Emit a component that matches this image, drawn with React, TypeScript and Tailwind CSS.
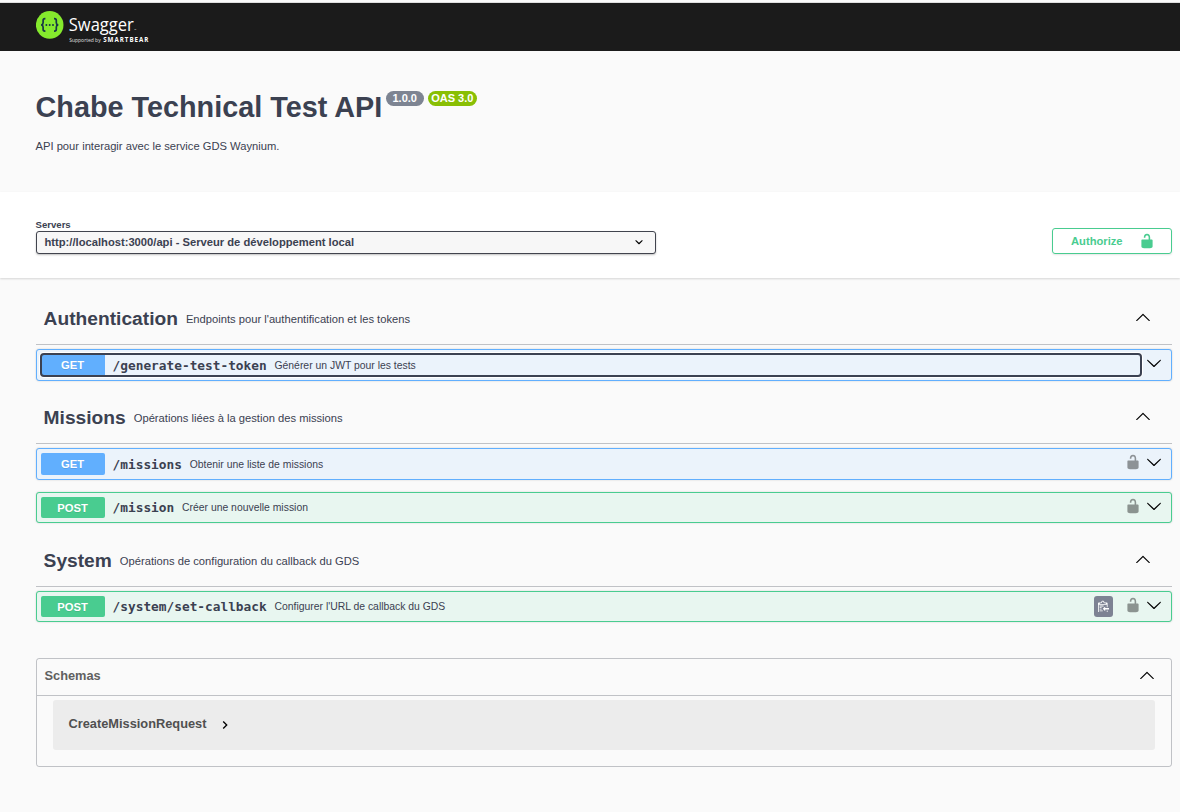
import React from "react";

const UP =
  "M17.418 14.908c.272.268.709.268.979 0s.271-.701 0-.969l-7.908-7.83c-.27-.268-.707-.268-.979 0l-7.908 7.83c-.27.268-.27.701 0 .969.271.268.709.268.979 0L10 7.767l7.418 7.141z";
const DOWN =
  "M17.418 6.109c.272-.268.709-.268.979 0s.271.701 0 .969l-7.908 7.83c-.27.268-.707.268-.979 0l-7.908-7.83c-.27-.268-.27-.701 0-.969.271-.268.709-.268.979 0L10 13.25l7.418-7.141z";
const SELECT_ARROW =
  "M13.418 7.859c.271-.268.709-.268.978 0 .27.268.272.701 0 .969l-3.908 3.83c-.27.268-.707.268-.979 0l-3.908-3.83c-.27-.267-.27-.701 0-.969.271-.268.709-.268.978 0L10 11l3.418-3.141z";
const UNLOCKED =
  "M15.8 8H14V5.6C14 2.703 12.665 1 10 1 7.334 1 6 2.703 6 5.6V6h2v-.801C8 3.754 8.797 3 10 3c1.203 0 2 .754 2 2.199V8H4c-.553 0-1 .646-1 1.199V17c0 .549.428 1.139.951 1.307l1.197.387C5.672 18.861 6.55 19 7.1 19h5.8c.549 0 1.428-.139 1.951-.307l1.196-.387c.524-.167.953-.757.953-1.306V9.199C17 8.646 16.352 8 15.8 8z";
const CLIPBOARD =
  "M2 13h4v1H2v-1zm5-6H2v1h5V7zm2 3V8l-3 3 3 3v-2h5v-2H9zM4.5 9H2v1h2.5V9zM2 12h2.5v-1H2v1zm9 1h1v2c-.02.28-.11.52-.3.7-.19.18-.42.28-.7.3H1c-.55 0-1-.45-1-1V4c0-.55.45-1 1-1h3c0-1.11.89-2 2-2 1.11 0 2 .89 2 2h3c.55 0 1 .45 1 1v5h-1V6H1v9h10v-2zM2 5h8c0-.55-.45-1-1-1H8c-.55 0-1-.45-1-1s-.45-1-1-1-1 .45-1 1-.45 1-1 1H3c-.55 0-1 .45-1 1z";

function Icon({ d, className = "" }: { d: string; className?: string }) {
  return (
    <svg viewBox="0 0 20 20" className={`size-4 shrink-0 ${className}`} fill="currentColor">
      <path d={d} />
    </svg>
  );
}

function Logo() {
  return (
    <svg width="130" height="48" viewBox="0 0 130 48" className="block">
      <circle cx="13.7" cy="21.9" r="13.8" fill="#85ea2d" />
      <g fill="none" stroke="#173647" strokeWidth="1.7">
        <path d="M9.4 15.6H8.9c-1.3 0-1.8.7-1.8 1.9v2.2c0 1.3-.6 2-1.9 2.2 1.3.2 1.9.9 1.9 2.2v2.2c0 1.2.5 1.9 1.8 1.9h.5" />
        <path d="M18 15.6h.5c1.3 0 1.8.7 1.8 1.9v2.2c0 1.3.6 2 1.9 2.2-1.3.2-1.9.9-1.9 2.2v2.2c0 1.2-.5 1.9-1.8 1.9H18" />
      </g>
      <g fill="#173647">
        <circle cx="10.4" cy="21.9" r="1" />
        <circle cx="13.7" cy="21.9" r="1" />
        <circle cx="17" cy="21.9" r="1" />
      </g>
      <g fill="#fff">
        <text x="32.8" y="27.8" fontFamily="'Open Sans', sans-serif" fontSize="19" textLength="65" lengthAdjust="spacingAndGlyphs">Swagger</text>
        <text x="98" y="27.8" fontFamily="'Open Sans', sans-serif" fontSize="3" opacity="0.8">™</text>
        <text x="33.2" y="38.8" fontFamily="'Open Sans', sans-serif" fontSize="5.2" textLength="31.5" lengthAdjust="spacingAndGlyphs" opacity="0.85">Supported by</text>
        <text x="67.2" y="38.9" fontFamily="'Open Sans', sans-serif" fontWeight="700" fontSize="6.2" textLength="45.2">SMARTBEAR</text>
      </g>
    </svg>
  );
}

function TagHeader({ name, text }: { name: string; text: string }) {
  return (
    <div className="flex h-[53px] items-center border-b border-[#3b4151]/30 pr-[21px] pl-[7.6px]">
      <h3 className="pt-[2px] text-[19.2px] leading-6 font-bold">{name}</h3>
      <p className="grow pt-[2px] pl-2 text-[11.2px]">{text}</p>
      <Icon d={UP} className="relative -top-px text-black" />
    </div>
  );
}

type OperationProps = {
  method: "GET" | "POST";
  path: string;
  summary: string;
  locked?: boolean;
  copy?: boolean;
  focused?: boolean;
};

function Operation({ method, path, summary, locked, copy, focused }: OperationProps) {
  const get = method === "GET";
  return (
    <div
      className={`flex items-center rounded-[3px] border pr-[9px] pl-1 shadow-[0_0_2px_rgba(0,0,0,0.19)] ${
        get ? "h-8 border-[#61affe] bg-[#ebf3fb]" : "h-[31px] border-[#49cc90] bg-[#e8f6f0]"
      }`}
    >
      <div
        className={`flex grow items-center ${
          focused
            ? "relative mr-[5px] h-[22px] rounded-[3px] shadow-[0_0_0_2px_#fff] outline-2 -outline-offset-1 outline-[#3b4151]"
            : ""
        }`}
      >
        <span
          className={`flex w-16 shrink-0 items-center justify-center rounded-[2px] pr-px text-[11.2px] font-bold text-white [text-shadow:0_1px_0_rgba(0,0,0,0.1)] ${
            get ? "h-[22px] bg-[#61affe]" : "h-[21px] bg-[#49cc90] pt-px"
          } ${focused ? "rounded-r-none" : ""}`}
        >
          {method}
        </span>
        <span
          className={`pl-[7.6px] font-['DejaVu_Sans_Mono',monospace] text-[12.8px] leading-4 font-semibold ${get ? "pt-[2px]" : ""}`}
        >
          {path}
        </span>
        <span className={`pl-[7.8px] text-[10.4px] ${get ? "pt-px" : ""}`}>{summary}</span>
      </div>
      {copy && (
        <span className="mr-3 flex h-[21px] w-[19px] items-center justify-center rounded-[3px] bg-[#7d8293] text-white">
          <svg viewBox="0 0 14 16" className="mb-px h-[12.8px] w-[11.2px]" fill="currentColor">
            <path d={CLIPBOARD} />
          </svg>
        </span>
      )}
      {locked && <Icon d={UNLOCKED} className="relative -top-[1.6px] mr-[5px] text-black/40" />}
      <Icon d={DOWN} className="relative -top-[1.6px] text-black" />
    </div>
  );
}

export default function App() {
  return (
    <div className="h-[812px] w-[1180px] overflow-hidden bg-[#fafafa] font-['Liberation_Sans',Arial,sans-serif] text-[#3b4151]">
      <div className="h-[3px] border-b border-[#dedede]" />
      <header className="h-12 bg-[#1b1b1b] pl-9">
        <Logo />
      </header>

      <section className="h-[141px] pt-10 pr-9 pl-[35.5px]">
        <div className="flex items-start">
          <h2 className="text-[28.8px] leading-[33px] font-bold">Chabe Technical Test API</h2>
          <span className="ml-[3.5px] flex h-[15px] w-[38px] items-center justify-center rounded-full bg-[#7d8492] text-[11px] font-bold text-white">
            1.0.0
          </span>
          <span className="ml-1 flex h-[15px] w-[49px] items-center justify-center rounded-full bg-[#89bf04] text-[11px] font-bold whitespace-nowrap text-white">
            OAS 3.0
          </span>
        </div>
        <p className="mt-[14px] text-[11.2px] leading-4">API pour interagir avec le service GDS Waynium.</p>
      </section>

      <section className="flex h-[86px] items-start justify-between bg-white pr-2 pl-9 shadow-[0_1px_2px_rgba(0,0,0,0.15)]">
        <div className="pt-[27px]">
          <p className="-ml-[0.5px] h-3 text-[9.6px] leading-[11px] font-bold">Servers</p>
          <div className="flex h-[23px] w-[620px] items-center justify-between rounded-[3px] border border-[#41444e] bg-[#f7f7f7] pr-2 pl-[7.5px] text-[11.2px] font-bold shadow-[0_1px_2px_rgba(0,0,0,0.25)]">
            http://localhost:3000/api - Serveur de développement local
            <Icon d={SELECT_ARROW} className="relative -top-[0.6px] text-black" />
          </div>
        </div>
        <button className="mt-9 flex h-[26px] w-[120px] items-center rounded-[3px] border border-[#49cc90] pl-[18px] text-[11.2px] font-bold text-[#49cc90] shadow-[0_1px_2px_rgba(0,0,0,0.1)]">
          <span className="w-[68px] text-left">Authorize</span>
          <Icon d={UNLOCKED} />
        </button>
      </section>

      <main className="pt-[14px] pr-2 pl-9">
        <TagHeader name="Authentication" text="Endpoints pour l'authentification et les tokens" />
        <div className="pt-1 pb-[10px]">
          <Operation method="GET" path="/generate-test-token" summary="Générer un JWT pour les tests" focused />
        </div>
        <TagHeader name="Missions" text="Opérations liées à la gestion des missions" />
        <div className="flex flex-col gap-3 pt-1 pb-[11px]">
          <Operation method="GET" path="/missions" summary="Obtenir une liste de missions" locked />
          <Operation method="POST" path="/mission" summary="Créer une nouvelle mission" locked />
        </div>
        <TagHeader name="System" text="Opérations de configuration du callback du GDS" />
        <div className="pt-1">
          <Operation method="POST" path="/system/set-callback" summary="Configurer l'URL de callback du GDS" copy locked />
        </div>

        <section className="mt-9 h-[109px] rounded-[3px] border border-[#3b4151]/30">
          <div className="flex h-[37px] items-center justify-between border-b border-[#3b4151]/30 pr-4 pb-[2px] pl-[7.5px]">
            <h4 className="text-[12.8px] font-bold text-[#606060]">Schemas</h4>
            <Icon d={UP} className="relative -top-[1.2px] text-black" />
          </div>
          <div className="mx-4 mt-1 flex h-[50px] items-center rounded-[3px] bg-[#ececec] pl-[15.5px] text-[12.8px] font-bold text-[#505050]">
            <span className="-mt-[3px]">CreateMissionRequest</span>
            <svg viewBox="0 0 24 24" className="ml-[11px] size-4 text-black" fill="currentColor">
              <path d="M10 6L8.59 7.41 13.17 12l-4.58 4.59L10 18l6-6z" />
            </svg>
          </div>
        </section>
      </main>
    </div>
  );
}
